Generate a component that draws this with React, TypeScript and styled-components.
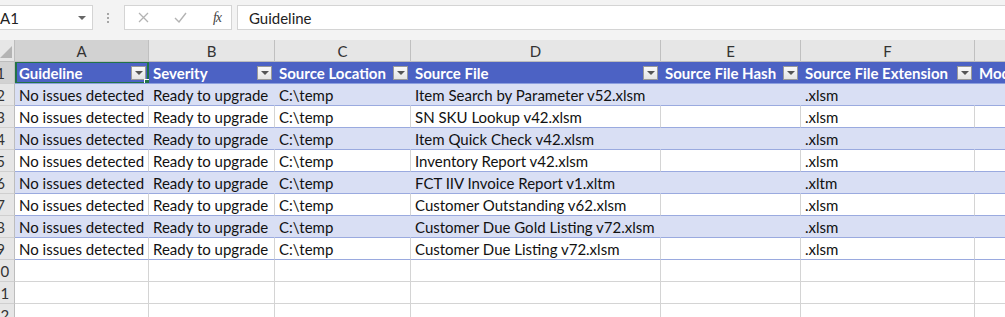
import React from "react";
import styled, { createGlobalStyle, css } from "styled-components";

const GlobalStyle = createGlobalStyle`
  html, body {
    margin: 0;
    padding: 0;
    background: #ffffff;
    overflow: hidden;
  }
  body {
    font-family: Lato, "Liberation Sans", Arial, sans-serif;
  }
`;

// column widths of the visible part of the sheet (G runs past the window)
const COLS = [15, 134, 126, 136, 250, 140, 174, 110];
const ROW_H = 22;

const Shell = styled.div`
  width: 1005px;
  height: 317px;
  overflow: hidden;
  background: #f3f3f3;
`;

const FormulaBar = styled.div`
  display: flex;
  align-items: flex-start;
  height: 40px;
  padding-top: 5px;
  box-sizing: border-box;
`;

const NameBox = styled.div`
  display: flex;
  align-items: center;
  justify-content: space-between;
  width: 99px;
  height: 25px;
  margin-left: -6px;
  padding: 0 6px 0 5px;
  box-sizing: border-box;
  background: #fff;
  border: 1px solid #d4d4d4;
  font-size: 15px;
  color: #222;
`;

const Caret = styled.span`
  width: 0;
  height: 0;
  border-left: 4px solid transparent;
  border-right: 4px solid transparent;
  border-top: 4px solid #666;
`;

const Dots = styled.div`
  display: flex;
  flex-direction: column;
  gap: 2px;
  width: 3px;
  margin: 8px 14px 0 14px;
  span {
    width: 2px;
    height: 2px;
    background: #a6a6a6;
  }
`;

const FxBox = styled.div`
  display: flex;
  align-items: center;
  width: 108px;
  height: 25px;
  box-sizing: border-box;
  background: #fff;
  border: 1px solid #d4d4d4;
  padding: 0 10px 0 10px;
`;

const FxIcon = styled.span<{ $w: number }>`
  display: flex;
  align-items: center;
  justify-content: center;
  width: ${(p) => p.$w}px;
  height: 23px;
`;

const FxText = styled.span`
  margin-left: auto;
  font-family: "Liberation Serif", "DejaVu Serif", serif;
  font-style: italic;
  font-size: 14px;
  color: #444;
  letter-spacing: -1px;
`;

const FormulaInput = styled.div`
  flex: 1;
  height: 25px;
  margin-left: 5px;
  box-sizing: border-box;
  background: #fff;
  border: 1px solid #d4d4d4;
  border-right: none;
  padding-left: 11px;
  display: flex;
  align-items: center;
  font-size: 15px;
  color: #222;
`;

const Grid = styled.div`
  display: grid;
  grid-template-columns: ${COLS.map((c) => `${c}px`).join(" ")};
  grid-auto-rows: ${ROW_H}px;
  background: #fff;
`;

const Corner = styled.div`
  position: relative;
  background: #e6e6e6;
  border-right: 1px solid #bdbdbd;
  border-bottom: 1px solid #bdbdbd;
  box-sizing: border-box;
  overflow: hidden;
  &::after {
    content: "";
    position: absolute;
    right: 2px;
    bottom: 3px;
    width: 0;
    height: 0;
    border-left: 12px solid transparent;
    border-bottom: 12px solid #b4b4b4;
  }
`;

const ColHead = styled.div<{ $active?: boolean }>`
  display: flex;
  align-items: center;
  justify-content: center;
  box-sizing: border-box;
  background: ${(p) => (p.$active ? "#d2d2d2" : "#e6e6e6")};
  border-right: 1px solid #c0c0c0;
  border-bottom: 1px solid #bdbdbd;
  font-size: 15px;
  color: #333;
`;

const RowHead = styled.div<{ $active?: boolean }>`
  display: flex;
  justify-content: flex-end;
  align-items: center;
  overflow: hidden;
  box-sizing: border-box;
  background: ${(p) => (p.$active ? "#d2d2d2" : "#e6e6e6")};
  border-right: 1px solid #bdbdbd;
  border-bottom: 1px solid #cfcfcf;
  font-size: 15px;
  color: #333;
  span {
    flex: 0 0 27px;
    text-align: center;
  }
`;

const HeaderCell = styled.div`
  position: relative;
  display: flex;
  align-items: center;
  padding-left: 4px;
  box-sizing: border-box;
  overflow: hidden;
  white-space: nowrap;
  background: #4c62c4;
  border-bottom: 1px solid #8c9fdf;
  color: #fff;
  font-size: 15px;
  font-weight: 700;
`;

const Selection = styled.div`
  position: absolute;
  inset: -1px 0 -1px 0;
  border: 2px solid #217346;
  pointer-events: none;
  &::after {
    content: "";
    position: absolute;
    right: -4px;
    bottom: -4px;
    width: 5px;
    height: 5px;
    background: #217346;
    border: 1px solid #fff;
  }
`;

const FilterButton = styled.span`
  position: absolute;
  right: 3px;
  top: 4px;
  width: 15px;
  height: 14px;
  box-sizing: border-box;
  background: linear-gradient(#fafafa, #e4e4e4);
  border: 1px solid #9a9a9a;
  display: flex;
  align-items: center;
  justify-content: center;
  &::before {
    content: "";
    width: 0;
    height: 0;
    border-left: 4px solid transparent;
    border-right: 4px solid transparent;
    border-top: 4px solid #555;
  }
`;

const Cell = styled.div<{ $band?: boolean; $table?: boolean }>`
  display: flex;
  align-items: center;
  padding-left: 4px;
  box-sizing: border-box;
  overflow: hidden;
  white-space: nowrap;
  font-size: 15px;
  color: #111;
  border-right: 1px solid #d4d4d4;
  border-bottom: 1px solid #d4d4d4;
  ${(p) =>
    p.$table &&
    css`
      border-bottom-color: #9aaadf;
      background: ${p.$band ? "#d9dff4" : "#ffffff"};
      border-right-color: ${p.$band ? "#d9dff4" : "#d4d4d4"};
    `}
`;

const headers = [
  "Guideline",
  "Severity",
  "Source Location",
  "Source File",
  "Source File Hash",
  "Source File Extension",
  "Module",
];

const files = [
  ["Item Search by Parameter v52.xlsm", ".xlsm"],
  ["SN SKU Lookup v42.xlsm", ".xlsm"],
  ["Item Quick Check v42.xlsm", ".xlsm"],
  ["Inventory Report v42.xlsm", ".xlsm"],
  ["FCT IIV Invoice Report v1.xltm", ".xltm"],
  ["Customer Outstanding v62.xlsm", ".xlsm"],
  ["Customer Due Gold Listing v72.xlsm", ".xlsm"],
  ["Customer Due Listing v72.xlsm", ".xlsm"],
];

// G's letter sits past the right edge of the window, so it is left blank
const letters = ["A", "B", "C", "D", "E", "F", ""];

export default function App() {
  return (
    <>
      <GlobalStyle />
      <Shell>
        <FormulaBar>
          <NameBox>
            A1
            <Caret />
          </NameBox>
          <Dots>
            <span />
            <span />
            <span />
          </Dots>
          <FxBox>
            <FxIcon $w={16}>
              <svg width="11" height="11" viewBox="0 0 11 11">
                <path d="M1 1L10 10M10 1L1 10" stroke="#b3b3b3" strokeWidth="1.3" />
              </svg>
            </FxIcon>
            <FxIcon $w={58}>
              <svg width="13" height="11" viewBox="0 0 13 11">
                <path d="M1 6L5 10L12 1" stroke="#b3b3b3" strokeWidth="1.4" fill="none" />
              </svg>
            </FxIcon>
            <FxText>fx</FxText>
          </FxBox>
          <FormulaInput>Guideline</FormulaInput>
        </FormulaBar>

        <Grid>
          <Corner />
          {letters.map((l, i) => (
            <ColHead key={i} $active={l === "A"}>
              {l}
            </ColHead>
          ))}

          <RowHead $active>
            <span>1</span>
          </RowHead>
          {headers.map((h, i) => (
            <HeaderCell key={h}>
              {h}
              {i < 6 && <FilterButton />}
              {i === 0 && <Selection />}
            </HeaderCell>
          ))}

          {files.map(([name, ext], r) => {
            const band = r % 2 === 0;
            const vals = [
              "No issues detected",
              "Ready to upgrade",
              "C:\\temp",
              name,
              "",
              ext,
              "",
            ];
            return (
              <React.Fragment key={name}>
                <RowHead>
                  <span>{r + 2}</span>
                </RowHead>
                {vals.map((v, c) => (
                  <Cell key={c} $table $band={band}>
                    {v}
                  </Cell>
                ))}
              </React.Fragment>
            );
          })}

          {[10, 11, 12].map((n) => (
            <React.Fragment key={n}>
              <RowHead>
                <span>{n}</span>
              </RowHead>
              {letters.map((_, i) => (
                <Cell key={i} />
              ))}
            </React.Fragment>
          ))}
        </Grid>
      </Shell>
    </>
  );
}
